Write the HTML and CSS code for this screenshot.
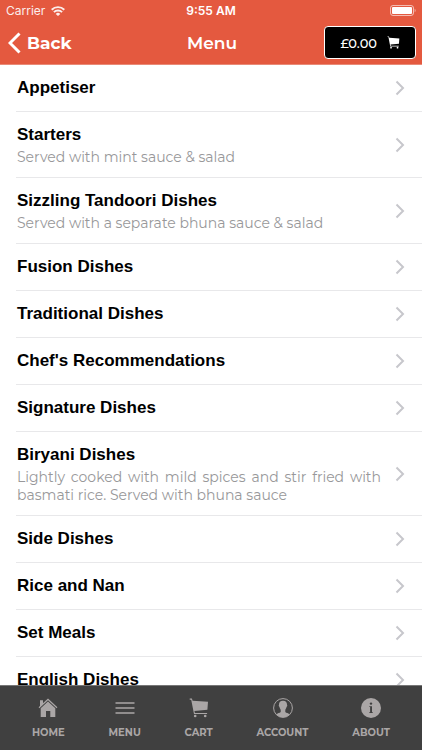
FILE: index.html
```html
<!DOCTYPE html>
<html lang="en">
<head>
  <meta charset="UTF-8">
  <meta name="viewport" content="width=device-width, initial-scale=1">
  <title>Menu</title>
  <link rel="stylesheet" href="styles.css">
</head>
<body>

  <svg class="sprite" aria-hidden="true">
    <symbol id="chevron" viewBox="0 0 10 16">
      <path d="M1.5 1.5L8 8l-6.5 6.5" fill="none" stroke="currentColor" stroke-width="2"/>
    </symbol>
    <symbol id="cart" viewBox="0 0 20 20">
      <path d="M.7.6h2.2l.7 2.2 15.4.9-.6 8.1L5.4 13l.5 2h12.2v1H5L2.2 1.7H.7z" fill="currentColor"/>
      <circle cx="6.2" cy="18" r="1.3" fill="currentColor"/>
      <circle cx="16.2" cy="18" r="1.3" fill="currentColor"/>
    </symbol>
  </svg>

  <header class="header">
    <div class="status">
      <div class="carrier">
        Carrier
        <svg class="wifi" viewBox="0 0 14 10">
          <g fill="none" stroke="currentColor" stroke-width="1.9">
            <path d="M.7 3.7a9 9 0 0 1 12.6 0"/>
            <path d="M2.9 6.2a5.8 5.8 0 0 1 8.2 0"/>
          </g>
          <path d="M4.7 7.9a3.2 3.2 0 0 1 4.6 0L7 10z" fill="currentColor"/>
        </svg>
      </div>
      <div class="time">9:55 AM</div>
      <svg class="battery" viewBox="0 0 26 11">
        <rect x=".5" y=".5" width="23" height="10" rx="2.5" fill="none" stroke="currentColor" opacity=".6"/>
        <rect x="2" y="2" width="20" height="7" rx="1" fill="currentColor"/>
        <path d="M24.7 3.8c1.2.5 1.2 2.9 0 3.4z" fill="currentColor" opacity=".6"/>
      </svg>
    </div>
    <div class="navbar">
      <button class="back" type="button">
        <svg class="back-icon" viewBox="0 0 13 22">
          <path d="M11.5 1.5L2 11l9.5 9.5" fill="none" stroke="currentColor" stroke-width="3"/>
        </svg>
        Back
      </button>
      <h1 class="title">Menu</h1>
      <button class="basket" type="button">
        £0.00
        <svg class="basket-icon"><use href="#cart"/></svg>
      </button>
    </div>
  </header>

  <main class="content">
    <ul class="menu">
      <li><a class="item" href="#appetiser"><div class="text"><h2>Appetiser</h2></div><svg class="arrow"><use href="#chevron"/></svg></a></li>
      <li><a class="item" href="#starters"><div class="text"><h2>Starters</h2><p>Served with mint sauce &amp; salad</p></div><svg class="arrow"><use href="#chevron"/></svg></a></li>
      <li><a class="item" href="#tandoori"><div class="text"><h2>Sizzling Tandoori Dishes</h2><p>Served with a separate bhuna sauce &amp; salad</p></div><svg class="arrow"><use href="#chevron"/></svg></a></li>
      <li><a class="item" href="#fusion"><div class="text"><h2>Fusion Dishes</h2></div><svg class="arrow"><use href="#chevron"/></svg></a></li>
      <li><a class="item" href="#traditional"><div class="text"><h2>Traditional Dishes</h2></div><svg class="arrow"><use href="#chevron"/></svg></a></li>
      <li><a class="item" href="#chef"><div class="text"><h2>Chef's Recommendations</h2></div><svg class="arrow"><use href="#chevron"/></svg></a></li>
      <li><a class="item" href="#signature"><div class="text"><h2>Signature Dishes</h2></div><svg class="arrow"><use href="#chevron"/></svg></a></li>
      <li><a class="item" href="#biryani"><div class="text"><h2>Biryani Dishes</h2><p>Lightly cooked with mild spices and stir fried with basmati rice. Served with bhuna sauce</p></div><svg class="arrow"><use href="#chevron"/></svg></a></li>
      <li><a class="item" href="#sides"><div class="text"><h2>Side Dishes</h2></div><svg class="arrow"><use href="#chevron"/></svg></a></li>
      <li><a class="item" href="#rice"><div class="text"><h2>Rice and Nan</h2></div><svg class="arrow"><use href="#chevron"/></svg></a></li>
      <li><a class="item" href="#set-meals"><div class="text"><h2>Set Meals</h2></div><svg class="arrow"><use href="#chevron"/></svg></a></li>
      <li><a class="item" href="#english"><div class="text"><h2>English Dishes</h2></div><svg class="arrow"><use href="#chevron"/></svg></a></li>
    </ul>
  </main>

  <nav class="tabs">
    <a class="tab" href="#home">
      <svg class="tab-icon" viewBox="0 0 20 20" fill="currentColor">
        <path d="M2 2.2h3v3L2 8zM10 .6l9.4 8.7-.8.9L10 2.3 1.4 10.2l-.8-.9z"/>
        <path d="M10 3.6l7.3 6.7V19h-5v-6H8v6H2.7v-8.7z"/>
      </svg>
      HOME
    </a>
    <a class="tab" href="#menu">
      <svg class="tab-icon" viewBox="0 0 20 20">
        <path d="M.5 5h19M.5 10h19M.5 15h19" stroke="currentColor" stroke-width="1.7"/>
      </svg>
      MENU
    </a>
    <a class="tab" href="#cart-page">
      <svg class="tab-icon"><use href="#cart"/></svg>
      CART
    </a>
    <a class="tab" href="#account">
      <svg class="tab-icon" viewBox="0 0 20 20">
        <circle cx="10" cy="10" r="9.4" fill="none" stroke="currentColor" stroke-width="1"/>
        <path d="M10 2.8c2.8 0 4.1 1.6 4 4 .5.6.2 1.9-.5 2.3-.3 1.4-.8 2-1.2 2.7v2.1c.8 1 3.4 1.2 4.6 2.4A9.3 9.3 0 0 1 3.1 16.3c1.2-1.2 3.8-1.4 4.6-2.4v-2.1c-.4-.7-.9-1.3-1.2-2.7-.7-.4-1-1.7-.5-2.3-.1-2.4 1.2-4 4-4z" fill="currentColor"/>
      </svg>
      ACCOUNT
    </a>
    <a class="tab" href="#about">
      <svg class="tab-icon" viewBox="0 0 20 20">
        <circle cx="10" cy="10" r="10" fill="currentColor"/>
        <circle cx="10" cy="5.6" r="1.2" fill="#404040"/>
        <path d="M8.3 8.2H11v6h.9v.8H8.2v-.8h.9V9h-.8z" fill="#404040"/>
      </svg>
      ABOUT
    </a>
  </nav>

</body>
</html>
```
FILE: styles.css
```css
* {
  box-sizing: border-box;
}
body {
  margin: 0;
  height: 100vh;
  display: flex;
  flex-direction: column;
  background: #fff;
  font-family: Montserrat, Inter, sans-serif;
}
h1, h2, p, ul {
  margin: 0;
  padding: 0;
}
button {
  font-family: inherit;
  cursor: pointer;
}
svg {
  display: block;
  flex: none;
}
.sprite {
  position: absolute;
  width: 0;
  height: 0;
}

/* header */
.header {
  background: #e4593f;
  color: #fff;
  border-bottom: 1px solid #e98a77;
}
.status {
  display: grid;
  grid-template-columns: 1fr auto 1fr;
  align-items: center;
  height: 21px;
  padding: 0 6px;
  font: 12px Inter, sans-serif;
}
.carrier {
  display: flex;
  align-items: center;
  gap: 6px;
  opacity: 0.9;
}
.wifi {
  width: 14px;
  height: 10px;
}
.time {
  font-weight: 600;
}
.battery {
  width: 26px;
  height: 11px;
  justify-self: end;
}
.navbar {
  display: grid;
  grid-template-columns: 1fr auto 1fr;
  align-items: center;
  height: 43px;
  padding: 0 6px 0 8px;
}
.back {
  display: flex;
  align-items: center;
  justify-self: start;
  gap: 6px;
  padding: 0;
  border: 0;
  background: none;
  color: inherit;
  font-size: 17px;
  font-weight: 700;
}
.back-icon {
  width: 13px;
  height: 22px;
}
.title {
  font-size: 17px;
  font-weight: 600;
}
.basket {
  display: flex;
  align-items: center;
  justify-self: end;
  gap: 10px;
  height: 33px;
  padding: 0 15px;
  border: 1px solid #fff;
  border-radius: 4px;
  background: #000;
  color: #fff;
  font-size: 13px;
  font-weight: 500;
}
.basket-icon {
  width: 13px;
  height: 13px;
}

/* list */
.content {
  flex: 1;
  min-height: 0;
  overflow-y: auto;
  scrollbar-width: none;
}
.menu {
  list-style: none;
  padding-left: 16px;
}
.item {
  display: flex;
  align-items: center;
  gap: 14px;
  padding: 12px 17px 12px 0;
  border-bottom: 1px solid #e8e8ea;
  color: #000;
  text-decoration: none;
}
.text {
  flex: 1;
  padding-left: 1px;
}
.item h2 {
  font: bold 17px/22px "Liberation Sans", Arial, sans-serif;
}
.item p {
  margin: 2px 0 -1px;
  color: #98989a;
  font-size: 14px;
  font-weight: 400;
  line-height: 18px;
  text-align: justify;
}
.arrow {
  width: 10px;
  height: 16px;
  color: #c7c7cc;
}

/* bottom tabs */
.tabs {
  display: flex;
  justify-content: space-between;
  height: 65px;
  padding: 12px 32px 0;
  border-top: 1px solid #777;
  background: #404040;
}
.tab {
  display: flex;
  flex-direction: column;
  align-items: center;
  gap: 8px;
  color: #aaa6a6;
  font-size: 10px;
  font-weight: 700;
  line-height: 14px;
  text-decoration: none;
}
.tab-icon {
  width: 20px;
  height: 20px;
}
```
